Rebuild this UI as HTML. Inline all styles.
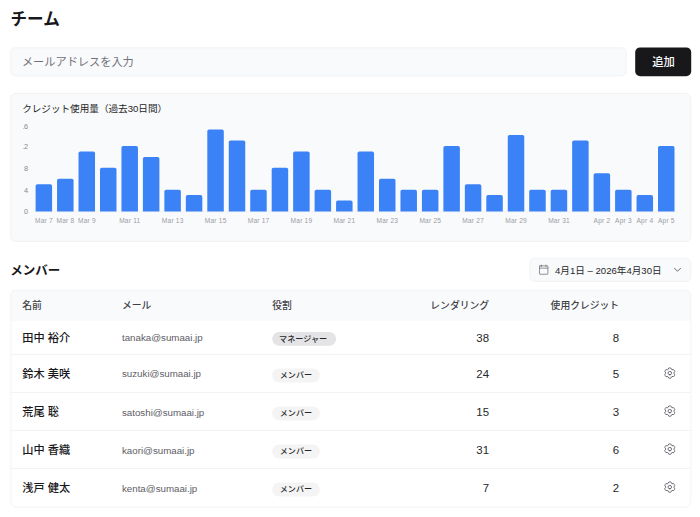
<!DOCTYPE html>
<html lang="ja">
<head>
<meta charset="utf-8">
<title>チーム</title>
<style>
html,body{margin:0;padding:0;background:#fff;}
body{width:700px;height:517px;position:relative;overflow:hidden;font-family:"Liberation Sans","Noto Sans CJK JP",sans-serif;color:#18181b;}
#cv{position:absolute;left:0;top:0;display:block;}
.em{position:absolute;font-size:9.72px;line-height:12px;color:#5d5d66;white-space:nowrap;}
.num{position:absolute;font-size:11.45px;line-height:14px;color:#27272a;white-space:nowrap;text-align:right;}
svg text{font-family:"Liberation Sans","Noto Sans CJK JP",sans-serif;}
</style>
</head>
<body>
<svg id="cv" width="700" height="517" viewBox="0 0 700 517">
<rect x="10.40" y="47.40" width="616.20" height="28.80" rx="5.0" fill="#f9fafb"/><rect x="10.80" y="47.80" width="615.40" height="28.00" rx="4.60" fill="none" stroke="#eff0f2" stroke-width="0.8"/>
<rect x="635.20" y="47.40" width="56.00" height="28.80" rx="5.0" fill="#18181b"/>
<rect x="10.40" y="93.00" width="680.80" height="148.80" rx="5.6" fill="#f9fafb"/><rect x="10.80" y="93.40" width="680.00" height="148.00" rx="5.20" fill="none" stroke="#eff0f2" stroke-width="0.8"/>
<rect x="529.40" y="257.80" width="161.80" height="24.00" rx="5.6" fill="#f9fafb"/><rect x="529.80" y="258.20" width="161.00" height="23.20" rx="5.20" fill="none" stroke="#eff0f2" stroke-width="0.8"/>
<clipPath id="tc"><rect x="10.4" y="289.8" width="680.8" height="217.5" rx="5.6"/></clipPath>
<g clip-path="url(#tc)"><rect x="10.4" y="289.8" width="680.8" height="31.25" fill="#f9fafb"/>
<rect x="10.4" y="354.00" width="680.8" height="0.8" fill="#eff0f2"/>
<rect x="10.4" y="392.00" width="680.8" height="0.8" fill="#eff0f2"/>
<rect x="10.4" y="430.00" width="680.8" height="0.8" fill="#eff0f2"/>
<rect x="10.4" y="468.00" width="680.8" height="0.8" fill="#eff0f2"/>
</g>
<rect x="10.80" y="290.20" width="680.00" height="216.70" rx="5.2" fill="none" stroke="#eff0f2" stroke-width="0.8"/>
<rect x="272.20" y="331.90" width="64.00" height="13.80" rx="6.9" fill="#e4e4e7"/>
<rect x="272.20" y="368.60" width="47.60" height="13.80" rx="6.9" fill="#f4f4f5"/>
<rect x="272.20" y="406.60" width="47.60" height="13.80" rx="6.9" fill="#f4f4f5"/>
<rect x="272.20" y="444.60" width="47.60" height="13.80" rx="6.9" fill="#f4f4f5"/>
<rect x="272.20" y="482.60" width="47.60" height="13.80" rx="6.9" fill="#f4f4f5"/>
<text x="10.50" y="25.45" font-size="16.6" font-weight="700" fill="#18181b">チーム</text>
<text x="21.92" y="66.20" font-size="11.2" fill="#71717a">メールアドレスを入力</text>
<text x="652.16" y="66.40" font-size="11.3" font-weight="500" fill="#ffffff">追加</text>
<text x="22.17" y="111.80" font-size="9.6" fill="#27272a">クレジット使用量（過去30日間）</text>
<clipPath id="yc"><rect x="23.1" y="100" width="10" height="130"/></clipPath><line x1="33" x2="677.5" y1="211.7" y2="211.7" stroke="#f0f0f3" stroke-width="0.8"/><g fill="#3b82f6"><path d="M35.60 211.50V186.00Q35.60 184.20 37.40 184.20H50.30Q52.10 184.20 52.10 186.00V211.50Z"/><path d="M57.06 211.50V180.54Q57.06 178.74 58.86 178.74H71.76Q73.56 178.74 73.56 180.54V211.50Z"/><path d="M78.52 211.50V153.24Q78.52 151.44 80.32 151.44H93.22Q95.02 151.44 95.02 153.24V211.50Z"/><path d="M99.99 211.50V169.62Q99.99 167.82 101.79 167.82H114.69Q116.49 167.82 116.49 169.62V211.50Z"/><path d="M121.45 211.50V147.78Q121.45 145.98 123.25 145.98H136.15Q137.95 145.98 137.95 147.78V211.50Z"/><path d="M142.91 211.50V158.70Q142.91 156.90 144.71 156.90H157.61Q159.41 156.90 159.41 158.70V211.50Z"/><path d="M164.37 211.50V191.46Q164.37 189.66 166.17 189.66H179.07Q180.87 189.66 180.87 191.46V211.50Z"/><path d="M185.83 211.50V196.92Q185.83 195.12 187.63 195.12H200.53Q202.33 195.12 202.33 196.92V211.50Z"/><path d="M207.30 211.50V131.40Q207.30 129.60 209.10 129.60H222.00Q223.80 129.60 223.80 131.40V211.50Z"/><path d="M228.76 211.50V142.32Q228.76 140.52 230.56 140.52H243.46Q245.26 140.52 245.26 142.32V211.50Z"/><path d="M250.22 211.50V191.46Q250.22 189.66 252.02 189.66H264.92Q266.72 189.66 266.72 191.46V211.50Z"/><path d="M271.68 211.50V169.62Q271.68 167.82 273.48 167.82H286.38Q288.18 167.82 288.18 169.62V211.50Z"/><path d="M293.14 211.50V153.24Q293.14 151.44 294.94 151.44H307.84Q309.64 151.44 309.64 153.24V211.50Z"/><path d="M314.61 211.50V191.46Q314.61 189.66 316.41 189.66H329.31Q331.11 189.66 331.11 191.46V211.50Z"/><path d="M336.07 211.50V202.38Q336.07 200.58 337.87 200.58H350.77Q352.57 200.58 352.57 202.38V211.50Z"/><path d="M357.53 211.50V153.24Q357.53 151.44 359.33 151.44H372.23Q374.03 151.44 374.03 153.24V211.50Z"/><path d="M378.99 211.50V180.54Q378.99 178.74 380.79 178.74H393.69Q395.49 178.74 395.49 180.54V211.50Z"/><path d="M400.46 211.50V191.46Q400.46 189.66 402.26 189.66H415.16Q416.96 189.66 416.96 191.46V211.50Z"/><path d="M421.92 211.50V191.46Q421.92 189.66 423.72 189.66H436.62Q438.42 189.66 438.42 191.46V211.50Z"/><path d="M443.38 211.50V147.78Q443.38 145.98 445.18 145.98H458.08Q459.88 145.98 459.88 147.78V211.50Z"/><path d="M464.84 211.50V186.00Q464.84 184.20 466.64 184.20H479.54Q481.34 184.20 481.34 186.00V211.50Z"/><path d="M486.30 211.50V196.92Q486.30 195.12 488.10 195.12H501.00Q502.80 195.12 502.80 196.92V211.50Z"/><path d="M507.77 211.50V136.86Q507.77 135.06 509.57 135.06H522.47Q524.27 135.06 524.27 136.86V211.50Z"/><path d="M529.23 211.50V191.46Q529.23 189.66 531.03 189.66H543.93Q545.73 189.66 545.73 191.46V211.50Z"/><path d="M550.69 211.50V191.46Q550.69 189.66 552.49 189.66H565.39Q567.19 189.66 567.19 191.46V211.50Z"/><path d="M572.15 211.50V142.32Q572.15 140.52 573.95 140.52H586.85Q588.65 140.52 588.65 142.32V211.50Z"/><path d="M593.61 211.50V175.08Q593.61 173.28 595.41 173.28H608.31Q610.11 173.28 610.11 175.08V211.50Z"/><path d="M615.08 211.50V191.46Q615.08 189.66 616.88 189.66H629.78Q631.58 189.66 631.58 191.46V211.50Z"/><path d="M636.54 211.50V196.92Q636.54 195.12 638.34 195.12H651.24Q653.04 195.12 653.04 196.92V211.50Z"/><path d="M658.00 211.50V147.78Q658.00 145.98 659.80 145.98H672.70Q674.50 145.98 674.50 147.78V211.50Z"/></g><g font-size="6.6" fill="#9c9ca5" text-anchor="middle" letter-spacing="0.2"><text x="43.95" y="222.65">Mar 7</text><text x="65.41" y="222.65">Mar 8</text><text x="86.87" y="222.65">Mar 9</text><text x="129.80" y="222.65">Mar 11</text><text x="172.72" y="222.65">Mar 13</text><text x="215.65" y="222.65">Mar 15</text><text x="258.57" y="222.65">Mar 17</text><text x="301.49" y="222.65">Mar 19</text><text x="344.42" y="222.65">Mar 21</text><text x="387.34" y="222.65">Mar 23</text><text x="430.27" y="222.65">Mar 25</text><text x="473.19" y="222.65">Mar 27</text><text x="516.12" y="222.65">Mar 29</text><text x="559.04" y="222.65">Mar 31</text><text x="601.96" y="222.65">Apr 2</text><text x="623.43" y="222.65">Apr 3</text><text x="644.89" y="222.65">Apr 4</text><text x="666.35" y="222.65">Apr 5</text></g><g font-size="7.3" fill="#888892" text-anchor="end" clip-path="url(#yc)"><text x="28.15" y="128.80">16</text><text x="28.15" y="148.80">12</text><text x="28.15" y="170.50">8</text><text x="28.15" y="192.50">4</text><text x="28.15" y="214.10">0</text></g>
<text x="10.27" y="274.50" font-size="12.5" font-weight="700" fill="#18181b">メンバー</text>
<g transform="translate(537.60 263.95) scale(0.04766)" fill="none" stroke="#71717a" stroke-width="16" stroke-linecap="round" stroke-linejoin="round"><rect x="40" y="40" width="176" height="176" rx="8"/><line x1="176" y1="24" x2="176" y2="56"/><line x1="80" y1="24" x2="80" y2="56"/><line x1="40" y1="88" x2="216" y2="88"/></g>
<text x="554.99" y="273.80" font-size="9.6" fill="#27272a" font-family="&quot;Noto Sans CJK JP&quot;,&quot;Liberation Sans&quot;,sans-serif">4月1日 – 2026年4月30日</text>
<g transform="translate(672.70 264.70) scale(0.03750)" fill="none" stroke="#5a5a63" stroke-width="24" stroke-linecap="round" stroke-linejoin="round"><polyline points="208 96 128 176 48 96"/></g>
<text x="22.17" y="309.35" font-size="9.8" font-weight="500" fill="#3f3f46">名前</text>
<text x="121.94" y="309.35" font-size="9.8" font-weight="500" fill="#3f3f46">メール</text>
<text x="272.20" y="309.35" font-size="9.8" font-weight="500" fill="#3f3f46">役割</text>
<text x="430.30" y="309.35" font-size="9.8" font-weight="500" fill="#3f3f46">レンダリング</text>
<text x="550.60" y="309.35" font-size="9.8" font-weight="500" fill="#3f3f46">使用クレジット</text>
<text x="22.35" y="342.25" font-size="11.2" font-weight="500" fill="#18181b">田中 裕介</text>
<text x="279.10" y="341.80" font-size="8.1" font-weight="500" fill="#27272a">マネージャー</text>
<text x="22.35" y="378.20" font-size="11.2" font-weight="500" fill="#18181b">鈴木 美咲</text>
<text x="279.72" y="378.30" font-size="8.1" font-weight="500" fill="#27272a">メンバー</text>
<g transform="translate(663.40 366.70) scale(0.05000)" fill="none" stroke="#62626b" stroke-width="18" stroke-linecap="round" stroke-linejoin="round"><g transform="translate(128 128) scale(1.04 1) rotate(90) translate(-128 -128)"><circle cx="128" cy="128" r="34"/><path d="M130.05,206.11c-1.34,0-2.69,0-4,0L94,224a104.61,104.61,0,0,1-34.11-19.2l-.12-36c-.71-1.12-1.38-2.25-2-3.41L25.9,147.24a99.15,99.15,0,0,1,0-38.46l31.84-18.1c.65-1.15,1.32-2.29,2-3.41l.16-36A104.58,104.58,0,0,1,94,32l32,17.89c1.34,0,2.69,0,4,0L162,32a104.61,104.61,0,0,1,34.11,19.2l.12,36c.71,1.12,1.38,2.25,2,3.41l31.850,18.14a99.15,99.15,0,0,1,0,38.46l-31.84,18.1c-.65,1.15-1.32,2.29-2,3.41l-.16,36A104.58,104.58,0,0,1,162,224Z"/></g></g>
<text x="22.35" y="416.20" font-size="11.2" font-weight="500" fill="#18181b">荒尾 聡</text>
<text x="279.72" y="416.30" font-size="8.1" font-weight="500" fill="#27272a">メンバー</text>
<g transform="translate(663.40 404.70) scale(0.05000)" fill="none" stroke="#62626b" stroke-width="18" stroke-linecap="round" stroke-linejoin="round"><g transform="translate(128 128) scale(1.04 1) rotate(90) translate(-128 -128)"><circle cx="128" cy="128" r="34"/><path d="M130.05,206.11c-1.34,0-2.69,0-4,0L94,224a104.61,104.61,0,0,1-34.11-19.2l-.12-36c-.71-1.12-1.38-2.25-2-3.41L25.9,147.24a99.15,99.15,0,0,1,0-38.46l31.84-18.1c.65-1.15,1.32-2.29,2-3.41l.16-36A104.58,104.58,0,0,1,94,32l32,17.89c1.34,0,2.69,0,4,0L162,32a104.61,104.61,0,0,1,34.11,19.2l.12,36c.71,1.12,1.38,2.25,2,3.41l31.850,18.14a99.15,99.15,0,0,1,0,38.46l-31.84,18.1c-.65,1.15-1.32,2.29-2,3.41l-.16,36A104.58,104.58,0,0,1,162,224Z"/></g></g>
<text x="22.35" y="454.20" font-size="11.2" font-weight="500" fill="#18181b">山中 香織</text>
<text x="279.72" y="454.30" font-size="8.1" font-weight="500" fill="#27272a">メンバー</text>
<g transform="translate(663.40 442.70) scale(0.05000)" fill="none" stroke="#62626b" stroke-width="18" stroke-linecap="round" stroke-linejoin="round"><g transform="translate(128 128) scale(1.04 1) rotate(90) translate(-128 -128)"><circle cx="128" cy="128" r="34"/><path d="M130.05,206.11c-1.34,0-2.69,0-4,0L94,224a104.61,104.61,0,0,1-34.11-19.2l-.12-36c-.71-1.12-1.38-2.25-2-3.41L25.9,147.24a99.15,99.15,0,0,1,0-38.46l31.84-18.1c.65-1.15,1.32-2.29,2-3.41l.16-36A104.58,104.58,0,0,1,94,32l32,17.89c1.34,0,2.69,0,4,0L162,32a104.61,104.61,0,0,1,34.11,19.2l.12,36c.71,1.12,1.38,2.25,2,3.41l31.850,18.14a99.15,99.15,0,0,1,0,38.46l-31.84,18.1c-.65,1.15-1.32,2.29-2,3.41l-.16,36A104.58,104.58,0,0,1,162,224Z"/></g></g>
<text x="22.35" y="492.20" font-size="11.2" font-weight="500" fill="#18181b">浅戸 健太</text>
<text x="279.72" y="492.30" font-size="8.1" font-weight="500" fill="#27272a">メンバー</text>
<g transform="translate(663.40 480.70) scale(0.05000)" fill="none" stroke="#62626b" stroke-width="18" stroke-linecap="round" stroke-linejoin="round"><g transform="translate(128 128) scale(1.04 1) rotate(90) translate(-128 -128)"><circle cx="128" cy="128" r="34"/><path d="M130.05,206.11c-1.34,0-2.69,0-4,0L94,224a104.61,104.61,0,0,1-34.11-19.2l-.12-36c-.71-1.12-1.38-2.25-2-3.41L25.9,147.24a99.15,99.15,0,0,1,0-38.46l31.84-18.1c.65-1.15,1.32-2.29,2-3.41l.16-36A104.58,104.58,0,0,1,94,32l32,17.89c1.34,0,2.69,0,4,0L162,32a104.61,104.61,0,0,1,34.11,19.2l.12,36c.71,1.12,1.38,2.25,2,3.41l31.850,18.14a99.15,99.15,0,0,1,0,38.46l-31.84,18.1c-.65,1.15-1.32,2.29-2,3.41l-.16,36A104.58,104.58,0,0,1,162,224Z"/></g></g>
</svg>
<div class="em" style="left:122.0px;top:332.30px">tanaka@sumaai.jp</div>
<div class="num" style="left:429.0px;width:60px;top:331.10px">38</div>
<div class="num" style="left:559.1px;width:60px;top:331.10px">8</div>
<div class="em" style="left:122.0px;top:368.20px">suzuki@sumaai.jp</div>
<div class="num" style="left:429.0px;width:60px;top:367.00px">24</div>
<div class="num" style="left:559.1px;width:60px;top:367.00px">5</div>
<div class="em" style="left:122.0px;top:407.20px">satoshi@sumaai.jp</div>
<div class="num" style="left:429.0px;width:60px;top:405.00px">15</div>
<div class="num" style="left:559.1px;width:60px;top:405.00px">3</div>
<div class="em" style="left:122.0px;top:445.20px">kaori@sumaai.jp</div>
<div class="num" style="left:429.0px;width:60px;top:443.00px">31</div>
<div class="num" style="left:559.1px;width:60px;top:443.00px">6</div>
<div class="em" style="left:122.0px;top:483.20px">kenta@sumaai.jp</div>
<div class="num" style="left:429.0px;width:60px;top:481.00px">7</div>
<div class="num" style="left:559.1px;width:60px;top:481.00px">2</div>
</body></html>
